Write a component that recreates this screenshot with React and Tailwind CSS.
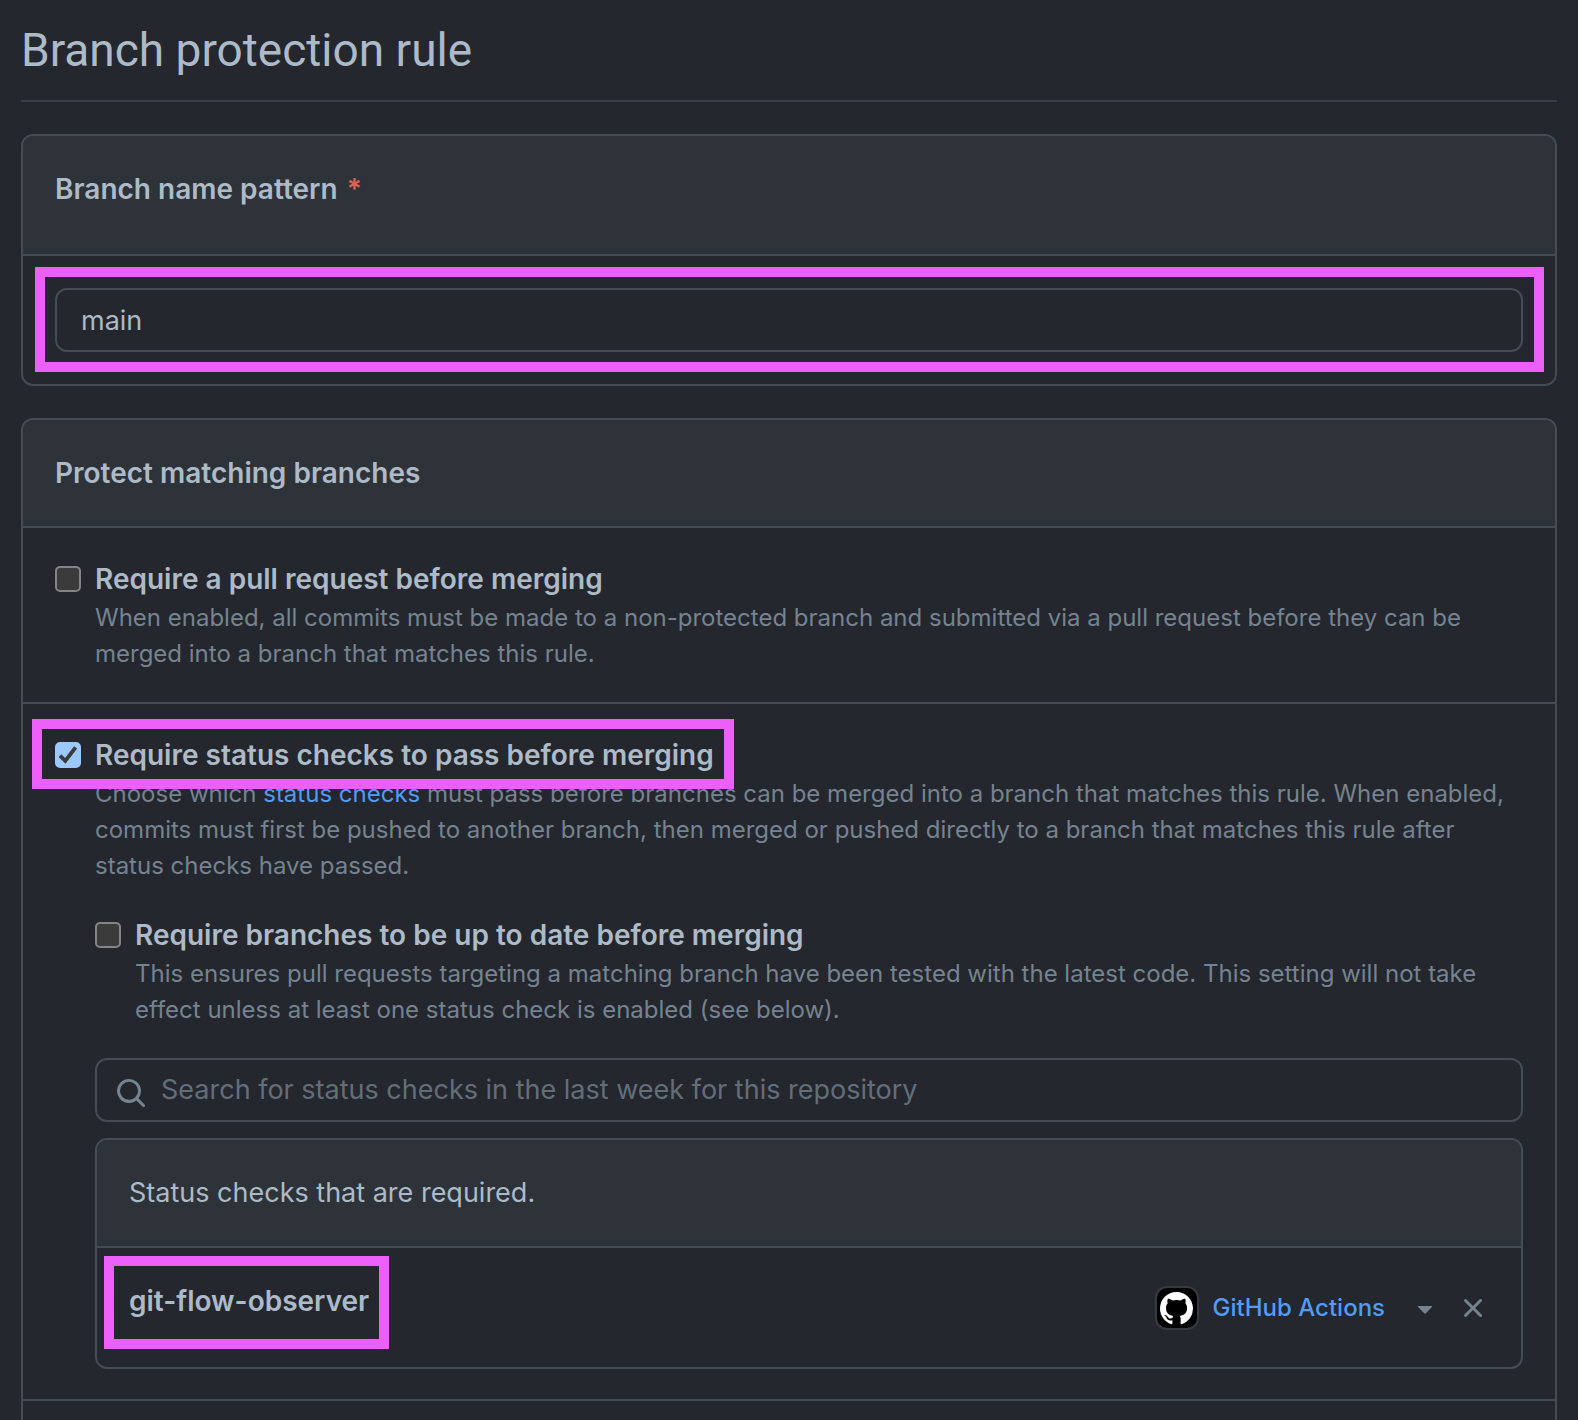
import React from "react";

function Highlight({ className }) {
  return (
    <span
      aria-hidden="true"
      className={`pointer-events-none absolute border-10 border-[#ec5ff9] ${className}`}
    />
  );
}

function Checkbox({ id, defaultChecked }) {
  return (
    <span className="grid size-[26px] shrink-0 place-items-center">
      <input
        id={id}
        type="checkbox"
        defaultChecked={defaultChecked}
        className="peer col-start-1 row-start-1 size-[26px] appearance-none rounded-[5px] border-2 border-[#858585] bg-[#3b3b3b] checked:border-[#9ac8ff] checked:bg-[#9ac8ff]"
      />
      <svg
        viewBox="0 0 26 26"
        className="pointer-events-none invisible col-start-1 row-start-1 size-[26px] peer-checked:visible"
        fill="none"
        stroke="#3b3b3b"
        strokeWidth="3.8"
        aria-hidden="true"
      >
        <path d="M5 13.6 L10.3 18.8 L20.6 5.4" />
      </svg>
    </span>
  );
}

function Option({ id, label, defaultChecked, highlighted, description, children }) {
  return (
    <div>
      <div className="flex">
        <div className="relative flex items-center gap-3.5">
          <Checkbox id={id} defaultChecked={defaultChecked} />
          <label htmlFor={id} className="text-[28px] leading-[42px] font-semibold">
            {label}
          </label>
          {highlighted && (
            <Highlight className="-top-[15px] -right-5 -bottom-[13px] -left-[23px]" />
          )}
        </div>
      </div>
      <div className="pl-10">
        <p className="text-2xl leading-9 text-[#768390]">{description}</p>
        {children}
      </div>
    </div>
  );
}

function SearchIcon() {
  return (
    <svg viewBox="0 0 16 16" className="mt-1.5 size-8" fill="#768390" aria-hidden="true">
      <path d="M10.68 11.74a6 6 0 0 1-7.922-8.982 6 6 0 0 1 8.982 7.922l3.04 3.04a.749.749 0 0 1-.326 1.275.749.749 0 0 1-.734-.215ZM11.5 7a4.499 4.499 0 1 0-8.997 0A4.499 4.499 0 0 0 11.5 7Z" />
    </svg>
  );
}

function GitHubAvatar() {
  return (
    <span className="grid size-11 place-items-center rounded-xl border-2 border-[#373a40] bg-black">
      <svg viewBox="0 0 16 16" className="size-[33px]" fill="#fff" aria-hidden="true">
        <path d="M8 0C3.58 0 0 3.58 0 8c0 3.54 2.29 6.53 5.47 7.59.4.07.55-.17.55-.38 0-.19-.01-.82-.01-1.49-2.01.37-2.53-.49-2.69-.94-.09-.23-.48-.94-.82-1.13-.28-.15-.68-.52-.01-.53.63-.01 1.08.58 1.23.82.72 1.21 1.87.87 2.33.66.07-.52.28-.87.51-1.07-1.78-.2-3.64-.89-3.64-3.95 0-.87.31-1.59.82-2.15-.08-.2-.36-1.02.08-2.12 0 0 .67-.21 2.2.82.64-.18 1.32-.27 2-.27s1.36.09 2 .27c1.53-1.04 2.2-.82 2.2-.82.44 1.1.16 1.92.08 2.12.51.56.82 1.27.82 2.15 0 3.07-1.87 3.75-3.65 3.95.29.25.54.73.54 1.48 0 1.07-.01 1.93-.01 2.2 0 .21.15.46.55.38A8.01 8.01 0 0 0 16 8c0-4.42-3.58-8-8-8Z" />
      </svg>
    </span>
  );
}

export default function App() {
  return (
    <main className="min-h-screen bg-[#24272e] px-[21px] pt-3.5 font-['Inter','Noto_Sans',sans-serif] text-[#adbac7]">
      <h1 className="border-b-2 border-[#373e47] pb-3.5 font-['Roboto','Inter',sans-serif] text-[46px] leading-[72px] font-normal">
        Branch protection rule
      </h1>

      <section className="mt-8 rounded-xl border-2 border-[#444c56]">
        <div className="rounded-t-[10px] border-b-2 border-[#444c56] bg-[#2e3339] px-8 pt-8 pb-11">
          <label htmlFor="pattern" className="block text-[28px] leading-[42px] font-semibold">
            Branch name pattern <span className="ml-0.5 text-[#e0604f]">*</span>
          </label>
        </div>
        <div className="p-8">
          <div className="relative">
            <input
              id="pattern"
              type="text"
              defaultValue="main"
              className="block h-16 w-full rounded-xl border-2 border-[#444c56] bg-transparent px-6 text-[27px] leading-10 outline-none"
            />
            <Highlight className="-top-[21px] -right-[21px] -bottom-5 -left-5" />
          </div>
        </div>
      </section>

      <section className="mt-8 rounded-t-xl border-2 border-b-0 border-[#444c56]">
        <h2 className="rounded-t-[10px] border-b-2 border-[#444c56] bg-[#2e3339] p-8 text-[28px] leading-[42px] font-semibold">
          Protect matching branches
        </h2>

        <div className="border-b-2 border-[#444c56] px-8 py-[30px]">
          <Option
            id="require-pr"
            label="Require a pull request before merging"
            description="When enabled, all commits must be made to a non-protected branch and submitted via a pull request before they can be merged into a branch that matches this rule."
          />
        </div>

        <div className="border-b-2 border-[#444c56] px-8 py-[30px]">
          <Option
            id="require-checks"
            label="Require status checks to pass before merging"
            defaultChecked
            highlighted
            description={
              <>
                Choose which{" "}
                <a href="#status-checks" className="text-[#539bf5]">
                  status checks
                </a>{" "}
                must pass before branches can be merged into a branch that matches this rule. When
                enabled, commits must first be pushed to another branch, then merged or pushed
                directly to a branch that matches this rule after status checks have passed.
              </>
            }
          >
            <div className="my-[30px]">
              <Option
                id="require-up-to-date"
                label="Require branches to be up to date before merging"
                description="This ensures pull requests targeting a matching branch have been tested with the latest code. This setting will not take effect unless at least one status check is enabled (see below)."
              />
            </div>

            <div className="flex h-16 items-center gap-3.5 rounded-xl border-2 border-[#444c56] px-[18px]">
              <SearchIcon />
              <input
                type="text"
                aria-label="Search for status checks"
                placeholder="Search for status checks in the last week for this repository"
                className="min-w-0 flex-1 bg-transparent text-[27px] leading-10 outline-none placeholder:text-[#636e7b]"
              />
            </div>

            <div id="status-checks" className="mt-4 rounded-xl border-2 border-[#444c56]">
              <div className="rounded-t-[10px] border-b-2 border-[#444c56] bg-[#2e3339] p-8 text-[27px] leading-[42px]">
                Status checks that are required.
              </div>
              <div className="flex items-center justify-between px-8 pt-8 pb-[31px]">
                <div className="relative self-start">
                  <strong className="block text-[28px] leading-[42px] font-semibold">
                    git-flow-observer
                  </strong>
                  <Highlight className="-top-6 -right-5 -bottom-[27px] -left-[25px]" />
                </div>
                <div className="flex h-14 items-center">
                  <button type="button" className="flex items-center text-[#539bf5]">
                    <GitHubAvatar />
                    <span className="ml-3.5 text-2xl leading-9 font-medium">GitHub Actions</span>
                    <svg viewBox="0 0 16 16" className="ml-6 size-8" fill="#768390" aria-hidden="true">
                      <path d="m4.427 7.427 3.396 3.396a.25.25 0 0 0 .354 0l3.396-3.396A.25.25 0 0 0 11.396 7H4.604a.25.25 0 0 0-.177.427Z" />
                    </svg>
                  </button>
                  <button type="button" aria-label="Remove git-flow-observer" className="ml-4">
                    <svg viewBox="0 0 16 16" className="size-8" fill="#768390" aria-hidden="true">
                      <path d="M3.72 3.72a.75.75 0 0 1 1.06 0L8 6.94l3.22-3.22a.749.749 0 0 1 1.275.326.749.749 0 0 1-.215.734L9.06 8l3.22 3.22a.749.749 0 0 1-.326 1.275.749.749 0 0 1-.734-.215L8 9.06l-3.22 3.22a.751.751 0 0 1-1.042-.018.751.751 0 0 1-.018-1.042L6.94 8 3.72 4.78a.75.75 0 0 1 0-1.06Z" />
                    </svg>
                  </button>
                </div>
              </div>
            </div>
          </Option>
        </div>

        <div className="h-[19px]" />
      </section>
    </main>
  );
}
